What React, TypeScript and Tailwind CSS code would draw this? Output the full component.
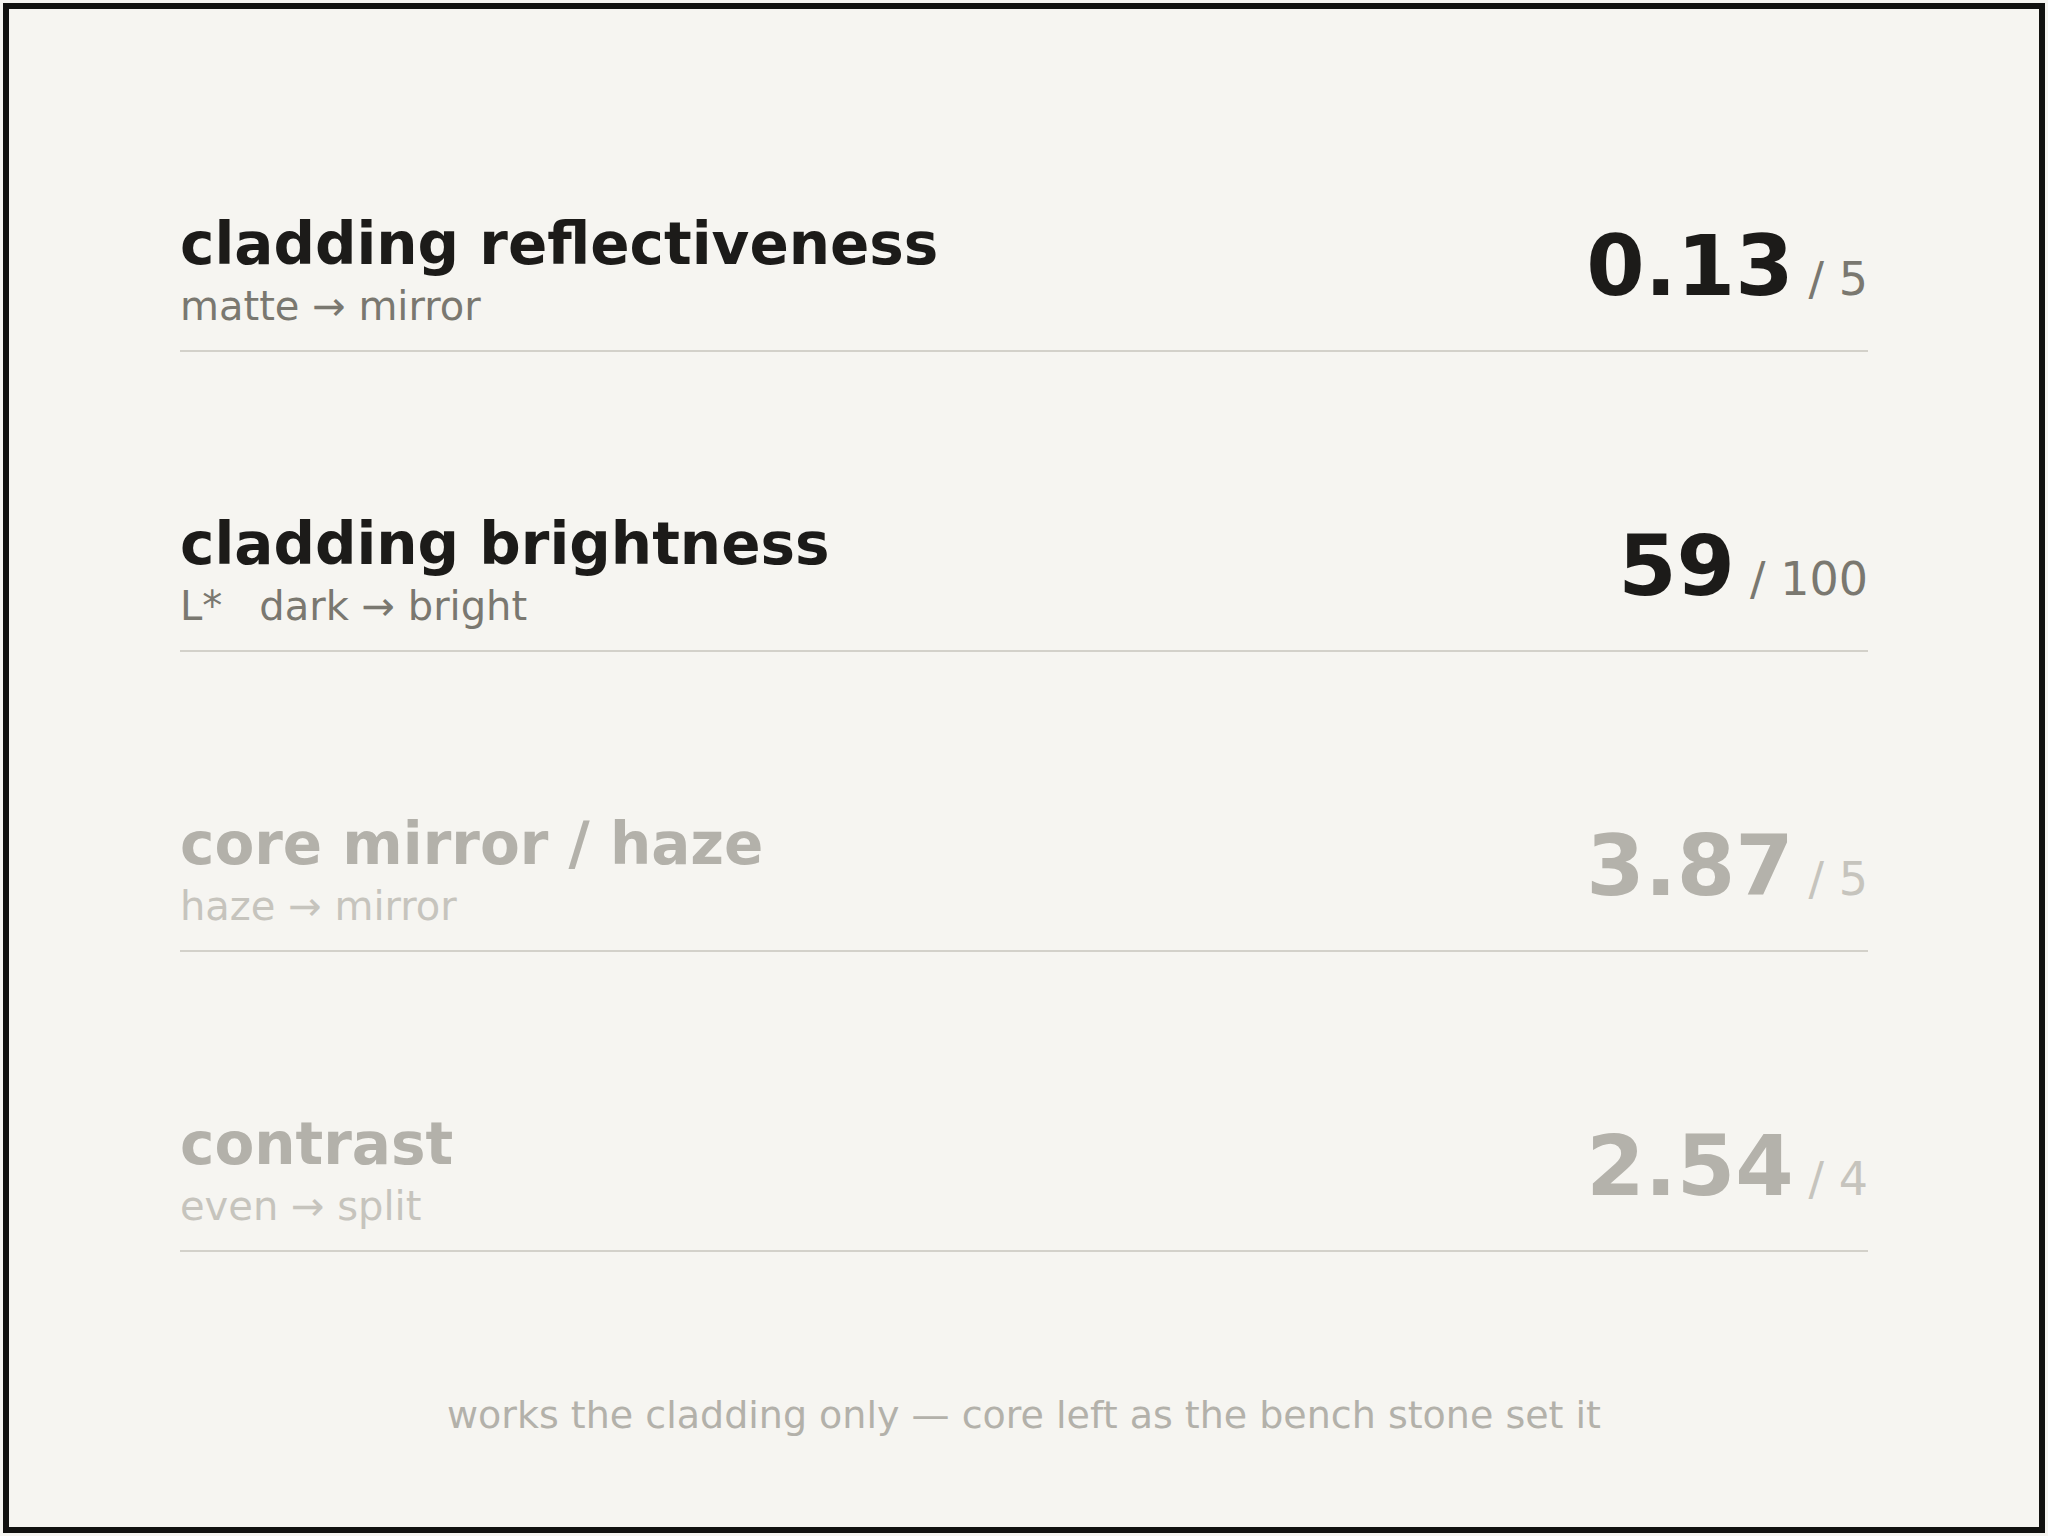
import React from "react";

interface Metric {
  title: string;
  prefix?: string;
  range: string;
  value: string;
  max: string;
  active: boolean;
}

const metrics: Metric[] = [
  { title: "cladding reflectiveness", range: "matte → mirror", value: "0.13", max: "/ 5", active: true },
  { title: "cladding brightness", prefix: "L*", range: "dark → bright", value: "59", max: "/ 100", active: true },
  { title: "core mirror / haze", range: "haze → mirror", value: "3.87", max: "/ 5", active: false },
  { title: "contrast", range: "even → split", value: "2.54", max: "/ 4", active: false },
];

const MetricRow: React.FC<{ m: Metric }> = ({ m }) => {
  return (
    <div className="flex items-end justify-between border-b-2 border-[#d3d1ca] pb-[16px]">
      {/* Label + range */}
      <div className="flex flex-col">
        <div
          className={`text-[58px] leading-[69px] font-bold ${
            m.active ? "text-[#1c1b19]" : "text-[#b3b1aa]"
          }`}>
          {m.title}
        </div>
        <div
          className={`text-[40px] leading-[55px] ${
            m.active ? "text-[#7a7870]" : "text-[#c6c4bd]"
          }`}>
          {m.prefix && <span className="mr-[37px]">{m.prefix}</span>}
          {m.range}
        </div>
      </div>

      {/* Value */}
      <div className="flex items-baseline mb-[26px]">
        <span
          className={`text-[84px] leading-none font-bold ${
            m.active ? "text-[#1c1b19]" : "text-[#b4b2ab]"
          }`}>
          {m.value}
        </span>
        <span
          className={`ml-[15px] text-[46px] leading-none ${
            m.active ? "text-[#7a7870]" : "text-[#c6c4bd]"
          }`}>
          {m.max}
        </span>
      </div>
    </div>
  );
};

export default function App() {
  return (
    <div
      className="w-[2048px] h-[1536px] bg-[#f6f5f1] p-[3px]"
      style={{ fontFamily: '"DejaVu Sans", "Liberation Sans", sans-serif' }}>
      <div className="h-full border-[6px] border-[#121210] flex flex-col px-[171px] pt-[201px]">
        <div className="flex flex-col gap-[158px]">
          {metrics.map((m) => (
            <MetricRow key={m.title} m={m} />
          ))}
        </div>

        {/* Footer note */}
        <div className="mt-[141px] text-center text-[38px] leading-[45.6px] text-[#b3b1aa]">
          works the cladding only — core left as the bench stone set it
        </div>
      </div>
    </div>
  );
}
